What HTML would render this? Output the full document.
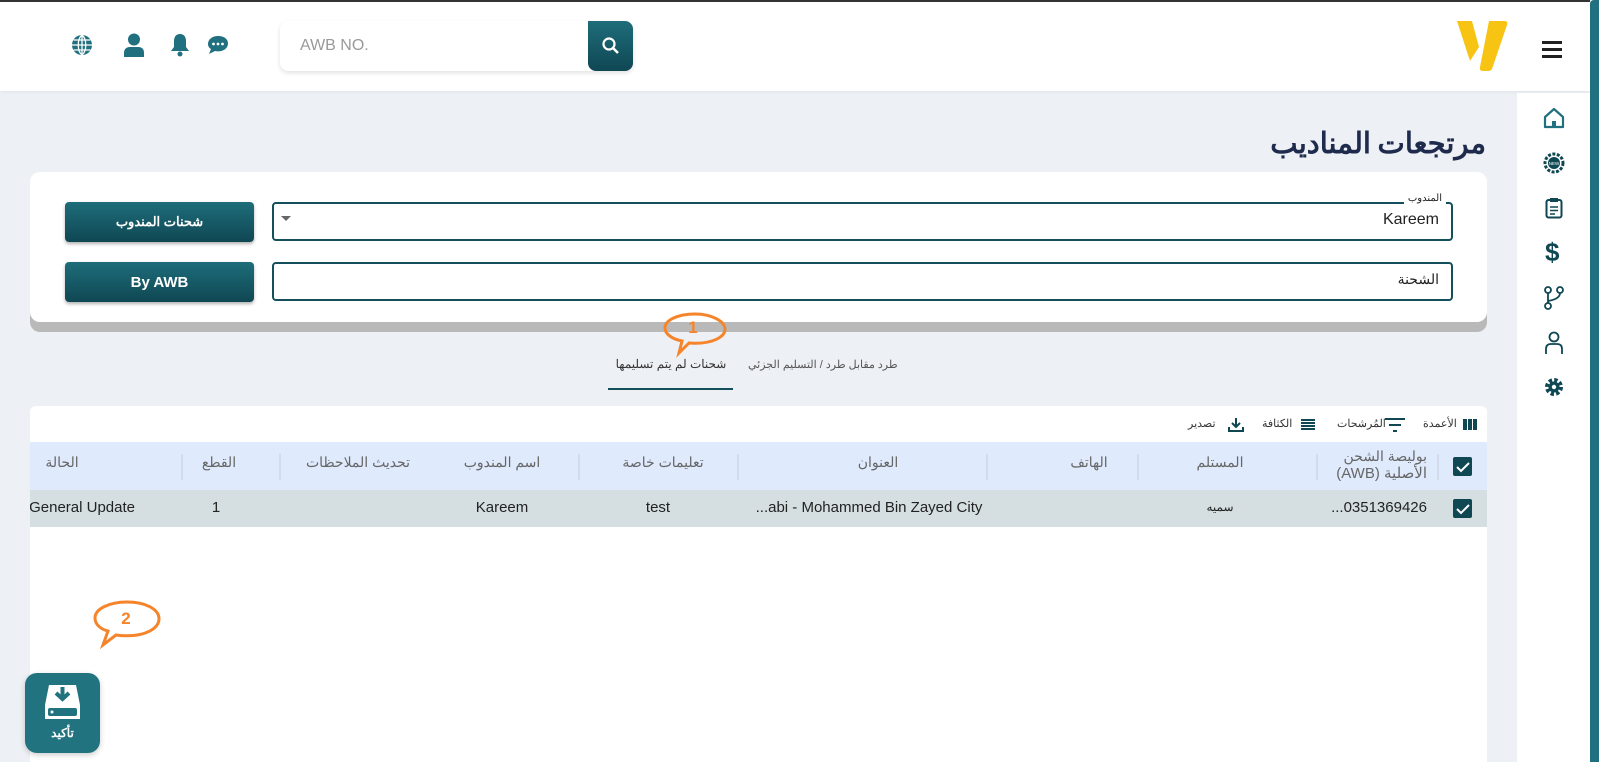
<!DOCTYPE html>
<html><head><meta charset="utf-8"><style>
*{box-sizing:border-box;margin:0;padding:0}
body{width:1599px;height:762px;overflow:hidden;background:#edf0f5;font-family:"Liberation Sans","Noto Sans CJK SC",sans-serif;position:relative}
.abs{position:absolute}
.hdr{left:0;top:0;width:1590px;height:91px;background:#fff;border-top:2px solid #333;box-shadow:0 1px 3px rgba(0,0,0,.06)}
.sb{left:1517px;top:93px;width:73px;height:669px;background:#fff}
.scroll{left:1590px;top:0;width:9px;height:762px;background:#21707f;border-radius:4px 0 0 0}
.card{left:30px;top:172px;width:1457px;height:150px;background:#fff;border-radius:10px;box-shadow:0 10px 0 #b9b9b9}
.inp{border:2px solid #14505b;border-radius:4px;background:#fff;height:39px;left:272px;width:1181px}
.btn{left:65px;width:189px;height:40px;border-radius:4px;background:linear-gradient(#1e6d7a,#0f4753);color:#fff;font-weight:bold;font-size:15px;display:flex;align-items:center;justify-content:center;box-shadow:0 2px 3px rgba(0,0,0,.3)}
.tbl{left:30px;top:406px;width:1457px;height:356px;background:#fff;border-radius:6px 6px 0 0}
.th{top:442px;left:30px;width:1457px;height:48px;background:#dfeafc}
.tr{top:490px;left:30px;width:1457px;height:37px;background:#d5dfe1}
.c{position:absolute;font-size:14px;color:#666;transform:translateX(-50%);white-space:nowrap}
.d{position:absolute;font-size:15px;color:#222;transform:translateX(-50%);white-space:nowrap}
.sep{position:absolute;top:446px;width:2px;height:26px;background:#d3dcea}
.chk{width:19px;height:19px;background:#0f4753;border-radius:2px}
</style></head><body>
<div class="abs hdr"></div>
<div class="abs scroll"></div>
<svg class="abs" style="left:1455px;top:19px" width="56" height="54" viewBox="0 0 56 54"><path d="M2 2 L17 2 L24 28 L15 42 Z" fill="#f7c414"/><path d="M34 2 L50 2 Q53 2 52 6 L37 50 Q36 52 33 52 L28 52 Q24 52 25 48 Z" fill="#f7c414"/></svg>
<div class="abs" style="left:1542px;top:41px;width:20px;height:3px;background:#222;box-shadow:0 7px 0 #222,0 14px 0 #222"></div>
<svg class="abs" style="left:71px;top:34px" width="22" height="22" viewBox="0 0 22 22"><circle cx="11" cy="11" r="10" fill="#21707f"/><path d="M1 11h20M2.5 6h17M2.5 16h17M11 1v20M11 1c-5 4-5 16 0 20M11 1c5 4 5 16 0 20" stroke="#fff" stroke-width="1.3" fill="none"/></svg>
<svg class="abs" style="left:123px;top:33px" width="22" height="24" viewBox="0 0 22 24"><circle cx="11" cy="6.5" r="6" fill="#21707f"/><path d="M1 24v-4q0-6 6-6h8q6 0 6 6v4z" fill="#21707f"/></svg>
<svg class="abs" style="left:170px;top:33px" width="20" height="24" viewBox="0 0 20 24"><path d="M10 1c-4 0-6 3-6 7v6l-3 4h18l-3-4V8c0-4-2-7-6-7z" fill="#21707f"/><circle cx="10" cy="21" r="2.5" fill="#21707f"/></svg>
<svg class="abs" style="left:207px;top:35px" width="22" height="20" viewBox="0 0 22 20"><path d="M11 1C5 1 1 4.5 1 9c0 2 1 4 3 5l-2 5 6-3c1 .3 2 .4 3 .4 6 0 10-3.5 10-8S17 1 11 1z" fill="#21707f"/><circle cx="6.5" cy="9" r="1.4" fill="#fff"/><circle cx="11" cy="9" r="1.4" fill="#fff"/><circle cx="15.5" cy="9" r="1.4" fill="#fff"/></svg>
<div class="abs" style="left:280px;top:21px;width:353px;height:50px;background:#fff;border-radius:8px;box-shadow:0 2px 5px rgba(0,0,0,.12)"></div>
<div class="abs" style="left:300px;top:37px;font-size:16px;color:#999">AWB NO.</div>
<div class="abs" style="left:588px;top:21px;width:45px;height:50px;border-radius:0 8px 8px 8px;background:linear-gradient(#1e6d7a,#0f4753)"></div>
<svg class="abs" style="left:601px;top:36px" width="20" height="20" viewBox="0 0 20 20"><circle cx="8" cy="8" r="5.5" stroke="#fff" stroke-width="2.2" fill="none"/><path d="M12 12l5 5" stroke="#fff" stroke-width="2.5"/></svg>
<div class="abs sb"></div>
<svg class="abs" style="left:1543px;top:107px" width="22" height="22" viewBox="0 0 22 22"><path d="M2 10L11 2l9 8v10H2z" fill="none" stroke="#21707f" stroke-width="2.2" stroke-linejoin="round"/><rect x="9" y="14" width="4" height="6" fill="#21707f"/></svg>
<svg class="abs" style="left:1543px;top:152px" width="22" height="22" viewBox="0 0 22 22"><circle cx="11" cy="11" r="9" fill="none" stroke="#0f4753" stroke-width="3" stroke-dasharray="3 1.5"/><circle cx="11" cy="11" r="6" fill="#0f4753"/><text x="11" y="13" font-size="4.5" fill="#fff" text-anchor="middle" font-family="Liberation Sans">NEW</text></svg>
<svg class="abs" style="left:1545px;top:197px" width="18" height="22" viewBox="0 0 18 22"><rect x="1.5" y="3" width="15" height="17.5" rx="2" fill="none" stroke="#0f4753" stroke-width="2"/><rect x="5" y="1" width="8" height="4" fill="#0f4753"/><path d="M5 10h8M5 13.5h8M5 17h5" stroke="#0f4753" stroke-width="1.6"/></svg>
<div class="abs" style="left:1545px;top:237px;font-size:26px;font-weight:bold;color:#0f4753">$</div>
<svg class="abs" style="left:1543px;top:286px" width="22" height="24" viewBox="0 0 22 24"><circle cx="5" cy="4" r="3" fill="none" stroke="#0f4753" stroke-width="1.8"/><circle cx="17" cy="4" r="3" fill="none" stroke="#0f4753" stroke-width="1.8"/><circle cx="5" cy="20" r="3" fill="none" stroke="#0f4753" stroke-width="1.8"/><path d="M5 7v10M17 7q0 6-12 8" fill="none" stroke="#0f4753" stroke-width="1.8"/></svg>
<svg class="abs" style="left:1544px;top:331px" width="20" height="24" viewBox="0 0 20 24"><circle cx="10" cy="6" r="4.5" fill="none" stroke="#0f4753" stroke-width="1.8"/><path d="M2 23v-5q0-5 5-5h6q5 0 5 5v5" fill="none" stroke="#0f4753" stroke-width="1.8"/></svg>
<svg class="abs" style="left:1544px;top:377px" width="20" height="20" viewBox="0 0 20 20"><circle cx="10" cy="10" r="7" fill="none" stroke="#0f4753" stroke-width="4" stroke-dasharray="3.3 2.2"/><circle cx="10" cy="10" r="5.5" fill="#0f4753"/><circle cx="10" cy="10" r="2.2" fill="#fff"/></svg>
<div class="abs" style="right:113px;top:120px;font-size:29px;font-weight:bold;color:#1f2b4d;font-family:'Noto Sans CJK SC','Liberation Sans',sans-serif" dir="rtl">مرتجعات المناديب</div>
<div class="abs card"></div>
<div class="abs inp" style="top:202px"></div>
<div class="abs" style="right:153px;top:193px;background:#fff;padding:0 4px;font-size:10px;color:#222" dir="rtl">المندوب</div>
<div class="abs" style="right:160px;top:211px;font-size:16px;color:#222">Kareem</div>
<div class="abs" style="left:281px;top:216px;width:0;height:0;border:5px solid transparent;border-top-color:#666"></div>
<div class="abs inp" style="top:262px"></div>
<div class="abs" style="right:160px;top:271px;font-size:14px;color:#222" dir="rtl">الشحنة</div>
<div class="abs btn" style="top:202px;font-size:13px" dir="rtl">شحنات المندوب</div>
<div class="abs btn" style="top:262px">By AWB</div>
<div class="abs" style="left:609px;top:357px;width:124px;text-align:center;font-size:12px;color:#333" dir="rtl">شحنات لم يتم تسليمها</div>
<div class="abs" style="left:608px;top:388px;width:125px;height:2px;background:#14505b"></div>
<div class="abs" style="left:748px;top:358px;font-size:11px;color:#555" dir="rtl">طرد مقابل طرد / التسليم الجزئي</div>
<svg class="abs" style="left:660px;top:310px" width="70" height="48" viewBox="0 0 70 48"><path d="M35 4C18 4 5 10 5 18c0 6 7 11 17 13l-3 12 10-10c2 0 4 .3 6 .3 17 0 30-6 30-14S52 4 35 4z" fill="none" stroke="#f5842a" stroke-width="3"/><text x="33" y="23" font-size="17" font-weight="bold" fill="#f5842a" text-anchor="middle" font-family="Liberation Sans">1</text></svg>
<div class="abs tbl"></div>
<div class="abs" style="left:1463px;top:419px;width:4px;height:11px;background:#0f4753;box-shadow:5px 0 0 #0f4753,10px 0 0 #0f4753"></div>
<div class="abs" style="left:1423px;top:417px;font-size:11px;color:#333" dir="rtl">الأعمدة</div>
<div class="abs" style="left:1385px;top:418px;width:20px;height:2px;background:#0f4753"></div><div class="abs" style="left:1389px;top:424px;width:12px;height:2px;background:#0f4753"></div><div class="abs" style="left:1393px;top:430px;width:4px;height:2px;background:#0f4753"></div>
<div class="abs" style="left:1337px;top:417px;font-size:11px;color:#333" dir="rtl">المُرشحات</div>
<div class="abs" style="left:1301px;top:419px;width:14px;height:2px;background:#0f4753;box-shadow:0 3px 0 #0f4753,0 6px 0 #0f4753,0 9px 0 #0f4753"></div>
<div class="abs" style="left:1262px;top:417px;font-size:11px;color:#333" dir="rtl">الكثافة</div>
<svg class="abs" style="left:1228px;top:417px" width="16" height="16" viewBox="0 0 16 16"><path d="M8 1v9M4 6l4 4 4-4M1 10v4h14v-4" fill="none" stroke="#0f4753" stroke-width="2"/></svg>
<div class="abs" style="left:1188px;top:417px;font-size:11px;color:#333" dir="rtl">تصدير</div>
<div class="abs th"></div>
<div class="abs tr"></div>
<div class="abs chk" style="left:1453px;top:457px"></div>
<div class="abs chk" style="left:1453px;top:499px"></div>
<svg class="abs" style="left:1456px;top:461px" width="14" height="12" viewBox="0 0 14 12"><path d="M1 6l4 4 8-8" stroke="#fff" stroke-width="2" fill="none"/></svg>
<svg class="abs" style="left:1456px;top:503px" width="14" height="12" viewBox="0 0 14 12"><path d="M1 6l4 4 8-8" stroke="#fff" stroke-width="2" fill="none"/></svg>
<div class="sep" style="left:1437px;top:454px"></div>
<div class="abs" style="right:172px;top:448px;font-size:14px;color:#666;text-align:right;line-height:17px" dir="rtl">بوليصة الشحن<br><span style="font-size:15px">الأصلية (AWB)</span></div>
<div class="sep" style="left:1316px;top:454px"></div>
<div class="c" style="left:1220px;top:454px" dir="rtl">المستلم</div>
<div class="sep" style="left:1137px;top:454px"></div>
<div class="c" style="left:1089px;top:454px" dir="rtl">الهاتف</div>
<div class="sep" style="left:986px;top:454px"></div>
<div class="c" style="left:878px;top:454px" dir="rtl">العنوان</div>
<div class="sep" style="left:737px;top:454px"></div>
<div class="c" style="left:663px;top:454px" dir="rtl">تعليمات خاصة</div>
<div class="sep" style="left:578px;top:454px"></div>
<div class="c" style="left:502px;top:454px" dir="rtl">اسم المندوب</div>
<div class="sep" style="left:279px;top:454px"></div>
<div class="c" style="left:358px;top:454px" dir="rtl">تحديث الملاحظات</div>
<div class="sep" style="left:181px;top:454px"></div>
<div class="c" style="left:219px;top:454px" dir="rtl">القطع</div>
<div class="c" style="left:62px;top:454px" dir="rtl">الحالة</div>
<div class="abs" style="right:172px;top:499px;font-size:15px;color:#222">...0351369426</div>
<div class="d" style="left:1220px;top:500px;font-size:12px" dir="rtl">سميه</div>
<div class="d" style="left:869px;top:499px">...abi - Mohammed Bin Zayed City</div>
<div class="d" style="left:658px;top:499px">test</div>
<div class="d" style="left:502px;top:499px">Kareem</div>
<div class="d" style="left:216px;top:499px">1</div>
<div class="abs" style="left:30px;top:499px;width:105px;overflow:hidden;white-space:nowrap;direction:rtl;text-align:right;font-size:15px;color:#222"><span dir="ltr">General Update</span></div>
<svg class="abs" style="left:85px;top:598px" width="82" height="64" viewBox="0 0 82 64"><path d="M42 4C24 4 10 11 10 20c0 6 5 11 13 13l-5 14 13-10c3 .5 7 .8 11 .8 18 0 32-7 32-17S60 4 42 4z" fill="none" stroke="#f5842a" stroke-width="3"/><text x="41" y="26" font-size="17" font-weight="bold" fill="#f5842a" text-anchor="middle" font-family="Liberation Sans">2</text></svg>
<div class="abs" style="left:25px;top:673px;width:75px;height:80px;background:#21737f;border-radius:12px;box-shadow:0 2px 6px rgba(0,0,0,.2)"></div>
<svg class="abs" style="left:44px;top:683px" width="37" height="38" viewBox="0 0 37 38"><path d="M5 2h27l4 20v14H1V22z" fill="#fff"/><path d="M18.5 4v11M12 10l6.5 6 6.5-6" stroke="#21737f" stroke-width="4" fill="none"/><rect x="4" y="25" width="29" height="8" rx="2" fill="#21737f"/><circle cx="8" cy="29" r="1.5" fill="#fff"/></svg>
<div class="abs" style="left:25px;top:726px;width:75px;text-align:center;font-size:12px;font-weight:bold;color:#fff" dir="rtl">تأكيد</div>
</body></html>
